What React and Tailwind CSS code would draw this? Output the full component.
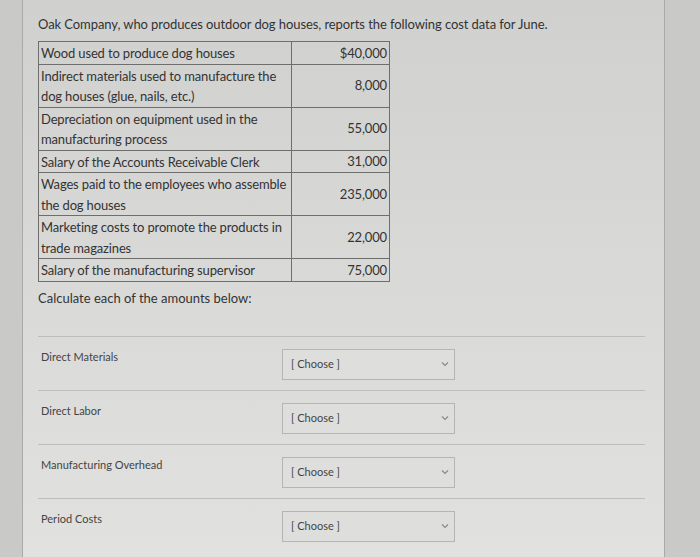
import React from "react";

const rows = [
  ["Wood used to produce dog houses", "$40,000"],
  ["Indirect materials used to manufacture the dog houses (glue, nails, etc.)", "8,000"],
  ["Depreciation on equipment used in the manufacturing process", "55,000"],
  ["Salary of the Accounts Receivable Clerk", "31,000"],
  ["Wages paid to the employees who assemble the dog houses", "235,000"],
  ["Marketing costs to promote the products in trade magazines", "22,000"],
  ["Salary of the manufacturing supervisor", "75,000"],
];

const items = ["Direct Materials", "Direct Labor", "Manufacturing Overhead", "Period Costs"];

function Chevron() {
  return (
    <svg width="8" height="6" viewBox="0 0 8 6" fill="none">
      <path d="M1 1.5 L4 4.5 L7 1.5" stroke="#8a8a8a" strokeWidth="1.2" />
    </svg>
  );
}

export default function App() {
  return (
    <div
      className="w-[700px] h-[557px] overflow-hidden bg-[#c9cac8] flex"
      style={{ fontFamily: "Lato, 'Open Sans', sans-serif" }}
    >
      <div className="w-[22px] shrink-0" />
      <div className="w-[643px] shrink-0 border-l border-r border-[#a9aaa8] bg-gradient-to-b from-[#d0d1cf] via-[#d9dad8] to-[#e1e1df] pl-[15px] pr-[20px] pt-[14px]">
        <p className="text-[13px] leading-[20px] text-[#333] tracking-[-0.08px]">
          Oak Company, who produces outdoor dog houses, reports the following cost data for June.
        </p>
        <table className="mt-[7px] border-collapse text-[13px] text-[#333] tracking-[-0.15px]">
          <tbody>
            {rows.map(([label, value], i) => (
              <tr key={i}>
                <td className="w-[253px] border border-[#6e6f6d] pl-[2px] pr-0 pt-[1px] align-top leading-[20.5px]">
                  {label}
                </td>
                <td className="w-[98px] border border-[#6e6f6d] px-[2px] text-right align-middle leading-[20.5px]">
                  {value}
                </td>
              </tr>
            ))}
          </tbody>
        </table>
        <p className="mt-[6px] text-[13px] leading-[20px] text-[#333]">Calculate each of the amounts below:</p>
        <div className="mt-[28px] w-[607px]">
          {items.map((it) => (
            <div key={it} className="border-t border-[#bdbebc] pt-[12px] pb-[10px] flex">
              <div className="w-[244px] pl-[3px] pt-[1px] text-[11px] leading-[14px] text-[#444]">{it}</div>
              <div className="w-[173px] h-[31px] border border-[#b5b6b4] bg-[#dedfdd] flex items-center justify-between pl-[8px] pr-[5px]">
                <span className="text-[11px] text-[#444]">[ Choose ]</span>
                <Chevron />
              </div>
            </div>
          ))}
        </div>
      </div>
    </div>
  );
}
